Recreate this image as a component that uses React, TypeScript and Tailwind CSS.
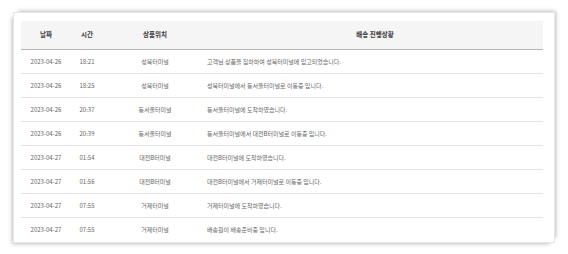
const rows = [
  ["2023-04-26", "18:21", "성북터미널", "고객님 상품을 집하하여 성북터미널에 입고되었습니다."],
  ["2023-04-26", "18:25", "성북터미널", "성북터미널에서 동서울터미널로 이동중 입니다."],
  ["2023-04-26", "20:37", "동서울터미널", "동서울터미널에 도착하였습니다."],
  ["2023-04-26", "20:39", "동서울터미널", "동서울터미널에서 대전B터미널로 이동중 입니다."],
  ["2023-04-27", "01:54", "대전B터미널", "대전B터미널에 도착하였습니다."],
  ["2023-04-27", "01:56", "대전B터미널", "대전B터미널에서 거제터미널로 이동중 입니다."],
  ["2023-04-27", "07:55", "거제터미널", "거제터미널에 도착하였습니다."],
  ["2023-04-27", "07:55", "거제터미널", "배송원이 배송준비중 입니다."],
];

export default function App() {
  return (
    <div className="h-[254px] w-[568px] bg-white pl-[13px] pt-[12px] font-['Noto_Sans_CJK_KR','Noto_Sans',sans-serif]">
      <div className="h-[231px] w-[542px] border border-[#e6e6e6] bg-white pl-[7px] pr-[11px] pt-[8px] shadow-[3px_-3px_4px_-2px_rgba(0,0,0,0.25),-3px_3px_4px_-2px_rgba(0,0,0,0.25)]">
        <table className="w-[522px] table-fixed border-collapse text-[6px] text-[#666]">
          <colgroup>
            <col className="w-[50px]" />
            <col className="w-[32px]" />
            <col className="w-[104px]" />
            <col />
          </colgroup>
          <thead>
            <tr className="h-[28px] border-b border-[#b5b5b5] bg-[#f5f5f5] text-[6.5px] font-bold text-[#3a3a3a]">
              <th className="pt-px text-center">날짜</th>
              <th className="pt-px text-center">시간</th>
              <th className="pt-px text-center">상품위치</th>
              <th className="pt-px text-center">배송 진행상황</th>
            </tr>
          </thead>
          <tbody>
            {rows.map((r, i) => (
              <tr
                key={i}
                className={`h-[24px] ${i < rows.length - 1 ? "border-b border-[#e4e4e4]" : ""}`}
              >
                <td className="text-center">{r[0]}</td>
                <td className="text-center">{r[1]}</td>
                <td className="text-center">{r[2]}</td>
                <td className="text-left">{r[3]}</td>
              </tr>
            ))}
          </tbody>
        </table>
      </div>
    </div>
  );
}
